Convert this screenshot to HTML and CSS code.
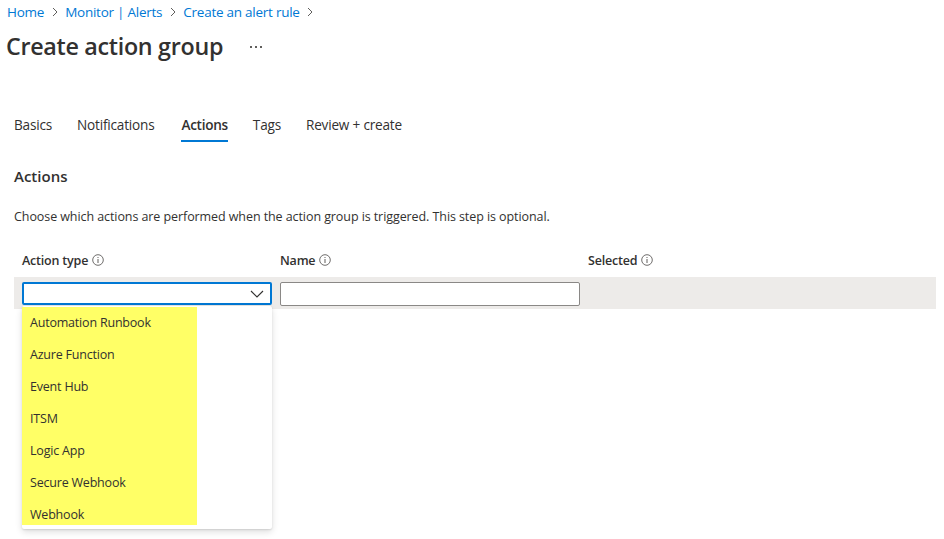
FILE: index.html
```html
<!DOCTYPE html>
<html lang="en">
<head>
<meta charset="utf-8">
<title>Create action group</title>
<link rel="stylesheet" href="styles.css">
</head>
<body>
<nav class="breadcrumb">
  <a class="crumb">Home</a>
  <svg class="sep" viewBox="0 0 8 12" width="8" height="12"><path d="M2 2l4 4-4 4" fill="none" stroke="#605e5c" stroke-width="1"/></svg>
  <a class="crumb">Monitor | Alerts</a>
  <svg class="sep" viewBox="0 0 8 12" width="8" height="12"><path d="M2 2l4 4-4 4" fill="none" stroke="#605e5c" stroke-width="1"/></svg>
  <a class="crumb">Create an alert rule</a>
  <svg class="sep" viewBox="0 0 8 12" width="8" height="12"><path d="M2 2l4 4-4 4" fill="none" stroke="#605e5c" stroke-width="1"/></svg>
</nav>
<header class="title-row">
  <h1 class="title">Create action group</h1>
  <svg class="more" viewBox="0 0 12 4" width="12" height="4"><rect x="0" y="1" width="2" height="2" fill="#605e5c"/><rect x="5" y="1" width="2" height="2" fill="#605e5c"/><rect x="10" y="1" width="2" height="2" fill="#605e5c"/></svg>
</header>
<div class="tabs">
  <span class="tab">Basics</span>
  <span class="tab">Notifications</span>
  <span class="tab active">Actions</span>
  <span class="tab">Tags</span>
  <span class="tab">Review + create</span>
</div>
<main class="content">
  <h2 class="section">Actions</h2>
  <p class="desc">Choose which actions are performed when the action group is triggered. This step is optional.</p>
  <div class="grid-head">
    <div class="col c1">Action type <svg class="info" viewBox="0 0 12 12" width="12" height="12"><circle cx="6" cy="6" r="5.3" fill="none" stroke="#605e5c" stroke-width="0.9"/><rect x="5.5" y="5" width="1" height="4" fill="#605e5c"/><rect x="5.5" y="3" width="1" height="1" fill="#605e5c"/></svg></div>
    <div class="col c2">Name <svg class="info" viewBox="0 0 12 12" width="12" height="12"><circle cx="6" cy="6" r="5.3" fill="none" stroke="#605e5c" stroke-width="0.9"/><rect x="5.5" y="5" width="1" height="4" fill="#605e5c"/><rect x="5.5" y="3" width="1" height="1" fill="#605e5c"/></svg></div>
    <div class="col c3">Selected <svg class="info" viewBox="0 0 12 12" width="12" height="12"><circle cx="6" cy="6" r="5.3" fill="none" stroke="#605e5c" stroke-width="0.9"/><rect x="5.5" y="5" width="1" height="4" fill="#605e5c"/><rect x="5.5" y="3" width="1" height="1" fill="#605e5c"/></svg></div>
  </div>
  <div class="grid-row">
    <div class="col c1">
      <div class="dropdown">
        <svg class="chev" viewBox="0 0 14 8" width="14" height="8"><path d="M1 1l6 6 6-6" fill="none" stroke="#323130" stroke-width="1.1"/></svg>
      </div>
      <div class="menu">
        <ul class="options">
          <li>Automation Runbook</li>
          <li>Azure Function</li>
          <li>Event Hub</li>
          <li>ITSM</li>
          <li>Logic App</li>
          <li>Secure Webhook</li>
          <li>Webhook</li>
        </ul>
      </div>
    </div>
    <div class="col c2"><div class="textbox"></div></div>
    <div class="col c3"></div>
  </div>
</main>
</body>
</html>
```
FILE: styles.css
```css
* { box-sizing: border-box; }
body {
  margin: 0;
  font-family: "Open Sans", "Noto Sans", sans-serif;
  color: #323130;
  background: #fff;
  width: 944px;
  height: 539px;
  overflow: hidden;
}
.breadcrumb {
  display: flex;
  align-items: center;
  gap: 6.5px;
  height: 24px;
  padding-left: 7px;
  font-size: 13.5px;
  letter-spacing: -0.25px;
}
.crumb { color: #0078d4; }
.title-row {
  display: flex;
  align-items: center;
  height: 44px;
  padding-left: 6px;
}
.title {
  margin: 0;
  font-size: 23.3px;
  font-weight: 600;
  letter-spacing: -0.3px;
  color: #323130;
}
.more { margin-left: 27px; margin-top: 1px; }
.tabs {
  display: flex;
  gap: 25px;
  margin-top: 44px;
  padding-left: 14px;
  font-size: 13.6px;
  letter-spacing: -0.2px;
}
.tab {
  height: 30px;
  line-height: 25px;
  border-bottom: 2px solid transparent;
}
.tab.active {
  margin-left: 2px;
  border-bottom-color: #0078d4;
  font-weight: 600;
  letter-spacing: -0.3px;
}
.content { padding-left: 14px; padding-right: 8px; }
.section {
  margin: 24px 0 0;
  font-size: 15px;
  font-weight: 600;
  height: 20px;
  line-height: 20px;
}
.desc {
  margin: 22px 0 0;
  font-size: 12.5px;
  letter-spacing: -0.08px;
  line-height: 18px;
}
.grid-head {
  display: flex;
  margin-top: 27px;
  height: 18px;
  line-height: 16px;
  font-size: 12.5px;
  font-weight: 600;
  letter-spacing: -0.2px;
}
.info { vertical-align: -1px; margin-left: 1px; }
.col { padding-left: 8px; }
.c1 { width: 258px; position: relative; }
.c2 { width: 308px; }
.c3 { flex: 1; }
.grid-row {
  display: flex;
  margin-top: 6px;
  height: 32px;
  background: #edebe9;
  align-items: center;
}
.grid-row .col { height: 100%; padding-top: 5px; }
.dropdown {
  width: 250px;
  height: 23px;
  border: 2px solid #0078d4;
  border-radius: 2px;
  background: #fff;
  display: flex;
  align-items: center;
  justify-content: flex-end;
  padding-right: 6px;
}
.textbox {
  width: 300px;
  height: 24px;
  border: 1px solid #8a8886;
  border-radius: 2px;
  background: #fff;
}
.menu {
  position: absolute;
  left: 8px;
  top: 29px;
  width: 250px;
  height: 223px;
  background: #fff;
  border-radius: 2px;
  box-shadow: 0 3px 7px rgba(0,0,0,0.13), 0 0.6px 1.8px rgba(0,0,0,0.11);
  padding-top: 1px;
  z-index: 2;
}
.options {
  list-style: none;
  margin: 0;
  padding: 0;
  width: 175px;
  height: 218px;
  background: #ffff66;
}
.options li {
  height: 32px;
  line-height: 32px;
  padding-left: 8px;
  font-size: 12.5px;
  letter-spacing: -0.2px;
  color: #323130;
  white-space: nowrap;
}
```
